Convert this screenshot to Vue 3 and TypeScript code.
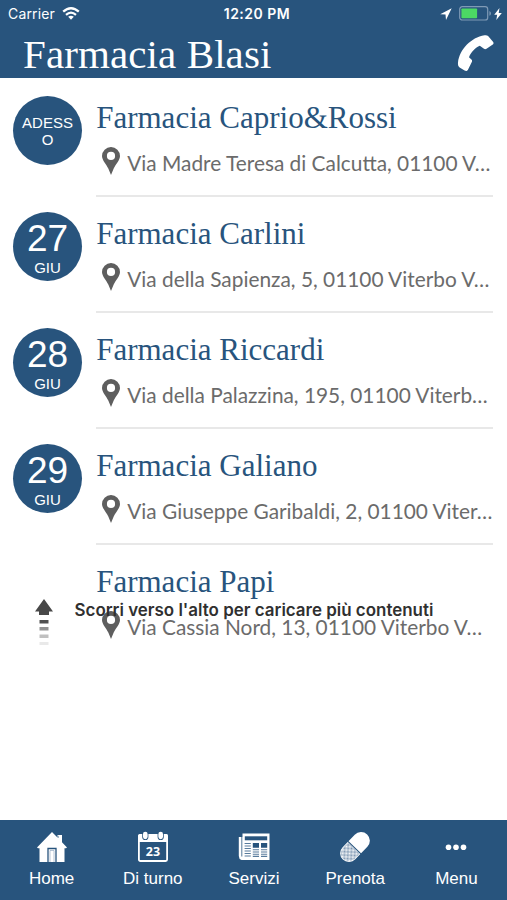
<script setup lang="ts">
interface Pharmacy {
  name: string
  address: string
  day?: string
  month?: string
  now?: string[]
}

const pharmacies: Pharmacy[] = [
  { name: 'Farmacia Caprio&Rossi', address: 'Via Madre Teresa di Calcutta, 01100 V…', now: ['ADESS', 'O'] },
  { name: 'Farmacia Carlini', address: 'Via della Sapienza, 5, 01100 Viterbo V…', day: '27', month: 'GIU' },
  { name: 'Farmacia Riccardi', address: 'Via della Palazzina, 195, 01100 Viterb…', day: '28', month: 'GIU' },
  { name: 'Farmacia Galiano', address: 'Via Giuseppe Garibaldi, 2, 01100 Viter…', day: '29', month: 'GIU' },
  { name: 'Farmacia Papi', address: 'Via Cassia Nord, 13, 01100 Viterbo V…' },
]

const tabs: { id: string; label: string }[] = [
  { id: 'home', label: 'Home' },
  { id: 'duty', label: 'Di turno' },
  { id: 'services', label: 'Servizi' },
  { id: 'book', label: 'Prenota' },
  { id: 'menu', label: 'Menu' },
]
</script>

<template>
  <div class="screen">
    <header class="top">
      <div class="status">
        <div class="status-left">
          <span class="carrier">Carrier</span>
          <svg class="wifi" viewBox="0 0 18 13" width="18" height="13">
            <path d="M1.200 4.700Q9-2.300 16.800 4.700" fill="none" stroke="#fff" stroke-width="2.300" />
            <path d="M4 7.800Q9 3.400 14 7.800" fill="none" stroke="#fff" stroke-width="2.200" />
            <path d="M6.200 9.800Q9 7.500 11.800 9.800L9 12.800Z" fill="#fff" />
          </svg>
        </div>
        <span class="time">12:20 PM</span>
        <div class="status-right">
          <svg viewBox="0 0 12 12" width="12" height="12"><path d="M11.700.3.200 6.300l5.300.300.500 5.300Z" fill="#fff" /></svg>
          <svg class="battery" viewBox="0 0 33 15" width="33" height="15">
            <rect x=".7" y=".7" width="28" height="13.300" rx="2.600" fill="none" stroke="#7f9ab6" stroke-width="1.200" />
            <rect x="2.400" y="2.400" width="15.700" height="9.800" rx=".8" fill="#4cd964" />
            <path d="M30.400 5v4.800q1.600-.7 1.600-2.400t-1.600-2.400" fill="#7f9ab6" />
          </svg>
          <svg viewBox="0 0 8 12" width="8" height="12"><path d="M5.500 0 .2 6.800h3L2.300 12l5.500-7.100H4.700Z" fill="#fff" /></svg>
        </div>
      </div>
      <div class="title-row">
        <h1>Farmacia Blasi</h1>
        <svg class="phone" viewBox="0 0 38 38" width="38" height="38">
          <path d="M1 28.500C2.500 15.500 14 3.500 27.500 1.300c1.400-.3 2.600-.2 3.600.8l4.900 5.600c.8 1 .7 2-.2 2.800l-6.300 4.300c-.8.500-1.700.6-2.500 0l-4.200-3C18.500 13.500 14 18.300 12 23.200l2.400 2.300c.8.800.9 1.600.4 2.600l-3.700 7.400c-.8 1.500-2 1.900-3.500 1l-5-3C1.200 32.600.8 30.500 1 28.500Z" fill="#fff" />
        </svg>
      </div>
    </header>

    <main>
      <article v-for="p in pharmacies" :key="p.name" class="row">
        <div class="when">
          <div v-if="p.now" class="badge now"><span v-for="part in p.now" :key="part">{{ part }}</span></div>
          <div v-else-if="p.day" class="badge"><span class="day">{{ p.day }}</span><span class="month">{{ p.month }}</span></div>
        </div>
        <div class="info">
          <h2>{{ p.name }}</h2>
          <div class="address">
            <svg viewBox="0 0 18 28" width="18" height="28">
              <path fill-rule="evenodd" d="M9 0a9 9 0 0 1 9 9c0 4.200-4.300 8.200-6.300 12.500L9 28l-2.700-6.500C4.300 17.200 0 13.200 0 9a9 9 0 0 1 9-9Zm0 4.800a4.100 4.100 0 1 0 0 8.200 4.100 4.100 0 0 0 0-8.200Z" fill="#5e5e5e" />
            </svg>
            <span>{{ p.address }}</span>
          </div>
        </div>
      </article>
      <div class="load-more">
        <svg viewBox="0 0 18 48" width="18" height="48">
          <path d="M9 0 18 12.500h-4V16H4v-3.500H0Z" fill="#484848" />
          <path d="M4.500 21h9v3.500h-9z" fill="#505050" />
          <path d="M4.500 28h9v3.500h-9z" fill="#929292" />
          <path d="M4.500 35.500h9V39h-9z" fill="#c0c0c0" />
          <path d="M4.500 43h9v3h-9z" fill="#e9e9e9" />
        </svg>
        <span>Scorri verso l'alto per caricare più contenuti</span>
      </div>
    </main>

    <nav>
      <a v-for="t in tabs" :key="t.id" class="tab">
        <svg v-if="t.id === 'home'" viewBox="0 0 32 32" width="32" height="32">
          <path d="M1 16.500 16 1l5.500 5.600V4H26v7.200l5 5.300-1 .8h-1.500V31H3.500V17.300H2Z" fill="#fff" />
          <path d="M22.200 7V4.800" fill="none" stroke="#28547d" stroke-width=".6" />
          <path d="M12 31V17.500h8V31" fill="none" stroke="#28547d" stroke-width="1.300" />
          <path d="M14 31V19.500h4V31" fill="none" stroke="#86a0ba" stroke-width=".6" />
        </svg>
        <svg v-else-if="t.id === 'duty'" viewBox="0 0 32 32" width="32" height="32">
          <path d="M1 11V5q0-2 2-2h26q2 0 2 2v6" fill="#fff" />
          <rect x="1.900" y="4" width="28.200" height="26" rx="1.500" fill="none" stroke="#fff" stroke-width="1.800" />
          <path d="M8.300 1v5M23.700 1v5" stroke="#28547d" stroke-width="6.200" stroke-linecap="round" />
          <path d="M8.300 3.200v2.600M23.700 3.200v2.600" stroke="#fff" stroke-width="4.700" stroke-linecap="round" />
          <text x="16" y="25" text-anchor="middle" class="date-number">23</text>
        </svg>
        <svg v-else-if="t.id === 'services'" viewBox="0 0 32 32" width="32" height="32">
          <path d="M4.500 2.500H31.500V29H3.500Q.8 28 .8 25V6h3.700Z" fill="#fff" />
          <path d="M3.800 6v19.500" stroke="#28547d" stroke-width=".8" />
          <path d="M6.800 5.300h22.400v4H6.800z" fill="#28547d" />
          <path d="M14.800 12h6.200v4.800h-6.200zM23 12h6.200v4.800H23z" fill="#28547d" />
          <path d="M6.600 12.500h6.200M6.600 15h6.200M6.600 17.500h6.200M6.600 20h6.200M6.600 22.500h6.200M6.600 25h6.200M14.800 18.800H21M14.800 21H21M14.800 23.200H21M14.800 25.400H21M23 18.800h6.200M23 21h6.200M23 23.200h6.200M23 25.400h6.200" stroke="#587b9c" stroke-width="1.100" />
        </svg>
        <svg v-else-if="t.id === 'book'" viewBox="0 0 32 32" width="32" height="32">
          <defs>
            <pattern id="grain" width="2" height="2" patternUnits="userSpaceOnUse">
              <path d="M0 0h1v1H0zM1 1h1v1H1z" fill="#7892ae" />
            </pattern>
          </defs>
          <g transform="rotate(-46 16 16)">
            <rect x="-1.500" y="7.200" width="35" height="17.600" rx="8.800" fill="#fff" />
            <path d="M14.500 8H7.300a8 8 0 0 0 0 16h7.200Z" fill="url(#grain)" />
            <path d="M15.200 7v18" stroke="#28547d" stroke-width="1.100" />
          </g>
        </svg>
        <svg v-else viewBox="0 0 32 32" width="32" height="32">
          <circle cx="8.500" cy="16.200" r="2.800" fill="#fff" />
          <circle cx="16" cy="16.200" r="2.800" fill="#fff" />
          <circle cx="23.500" cy="16.200" r="2.800" fill="#fff" />
        </svg>
        <span>{{ t.label }}</span>
      </a>
    </nav>
  </div>
</template>

<style>
body {
  margin: 0;
  background: #fff;
}
</style>

<style scoped>
.screen {
  display: flex;
  flex-direction: column;
  width: 507px;
  height: 900px;
  overflow: hidden;
  background: #fff;
  font-family: "Liberation Sans", sans-serif;
}

.top {
  flex: 0 0 78px;
  background: #28547d;
  color: #fff;
}

.status {
  display: grid;
  grid-template-columns: 1fr auto 1fr;
  align-items: center;
  height: 27px;
  padding: 0 6px 0 8px;
  font-family: Inter, sans-serif;
}

.status-left,
.status-right {
  display: flex;
  align-items: center;
}

.status-left {
  gap: 7px;
}

.status-right {
  justify-content: flex-end;
}

.carrier {
  font-size: 14px;
  letter-spacing: 0.15px;
}

.wifi {
  margin: -1px 0 0;
}

.time {
  margin-left: 5px;
  font-size: 14px;
  font-weight: 600;
  letter-spacing: 0.5px;
}

.status-right svg:first-child {
  margin-right: 1px;
}

.status-right svg:last-child {
  margin-right: -1px;
}

.battery {
  margin: 0 2px 0 6px;
}

.title-row {
  display: flex;
  justify-content: space-between;
  height: 51px;
  padding: 0 12px 0 23px;
}

h1 {
  margin: 4px 0 0;
  font: 400 41px/46px "Liberation Serif", serif;
  letter-spacing: 0.1px;
}

.phone {
  margin-top: 6.500px;
}

main {
  position: relative;
  flex: 1;
}

.row {
  display: flex;
  height: 116px;
  padding: 3px 14.500px 0 13px;
}

.row + .row {
  padding-top: 0;
}

.when {
  flex: 0 0 83.200px;
  padding-top: 15px;
}

.badge {
  display: flex;
  flex-direction: column;
  align-items: center;
  width: 69px;
  height: 69px;
  border-radius: 50%;
  background: #28547d;
  color: #fff;
}

.now {
  justify-content: center;
  font-size: 15px;
  line-height: 17px;
}

.day {
  margin-top: 7px;
  font-size: 37px;
  line-height: 40px;
}

.month {
  font-size: 15px;
  line-height: 18px;
}

.info {
  flex: 1;
  min-width: 0;
  box-sizing: border-box;
  height: 116px;
  border-bottom: 2px solid #e8e8e8;
}

.row:nth-child(5) .info {
  border-bottom: 0;
}

h2 {
  margin: 18px 0 0;
  color: #28547d;
  font: 400 31px/38px "Liberation Serif", serif;
  white-space: nowrap;
}

.address {
  display: flex;
  align-items: flex-start;
  gap: 7px;
  margin: 10px 0 0 6px;
  color: #6b6b6b;
  font: 400 20.850px/28px Lato, sans-serif;
  white-space: nowrap;
}

.address svg {
  flex: none;
}

.address span {
  margin-top: 2px;
}

.load-more {
  position: absolute;
  top: 521px;
  left: 35px;
  display: flex;
  gap: 21.500px;
  color: #303030;
  font: 600 16.950px/22px Inter, sans-serif;
  white-space: nowrap;
}

nav {
  display: grid;
  flex: 0 0 80px;
  grid-template-columns: repeat(5, 1fr);
  padding-left: 1px;
  background: #28547d;
  color: #fff;
}

.tab {
  display: flex;
  flex-direction: column;
  align-items: center;
  padding-top: 11px;
  font-size: 17px;
  line-height: 20px;
}

.tab span {
  margin-top: 6px;
}

.date-number {
  fill: #fff;
  font: 700 12.500px "Open Sans", sans-serif;
}
</style>
